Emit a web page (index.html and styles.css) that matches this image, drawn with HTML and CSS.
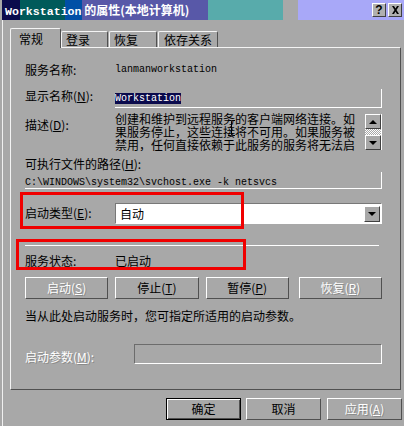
FILE: index.html
```html
<!DOCTYPE html>
<html lang="zh-CN">
<head>
    <meta charset="UTF-8">
    <title>Workstation 的属性</title>
    <link rel="stylesheet" href="styles.css">
</head>
<body>
    <div class="window">
        <div class="titlebar">
            <span class="title"><span class="title-mono">Workstation</span> 的属性(本地计算机)</span>
            <span class="tbtn tbtn-help">?</span>
            <span class="tbtn tbtn-close">
                <svg width="9" height="8" viewBox="0 0 9 8"><path d="M1 0h2l1.5 2.5L6 0h2L5.5 4 8 8H6L4.5 5.5 3 8H1l2.5-4z" fill="#000"/></svg>
            </span>
        </div>

        <div class="tabs">
            <div class="tab active">常规</div>
            <div class="tab tab-logon">登录</div>
            <div class="tab tab-recover">恢复</div>
            <div class="tab tab-deps">依存关系</div>
        </div>

        <div class="panel">
            <div class="row row-name">
                <span class="label">服务名称:</span>
                <span class="mono">lanmanworkstation</span>
            </div>

            <div class="row row-display">
                <span class="label">显示名称(<u>N</u>):</span>
                <div class="field display-field"><span class="mono selected">Workstation</span></div>
            </div>

            <div class="row row-desc">
                <span class="label">描述(<u>D</u>):</span>
                <div class="desc-text">创建和维护到远程服务的客户端网络连接。如果服务停止，这些连接将不可用。如果服务被禁用，任何直接依赖于此服务的服务将无法启</div>
                <div class="scrollbar">
                    <div class="sb-btn"><span class="arrow-up"></span></div>
                    <div class="sb-track"></div>
                    <div class="sb-btn"><span class="arrow-down"></span></div>
                </div>
            </div>

            <div class="row row-path-label">可执行文件的路径(<u>H</u>):</div>
            <div class="field path-field"><span class="mono">C:\WINDOWS\system32\svchost.exe -k netsvcs</span></div>

            <div class="row row-start">
                <span class="label">启动类型(<u>E</u>):</span>
                <div class="select">
                    <span class="select-value">自动</span>
                    <span class="select-btn"><span class="arrow-down"></span></span>
                </div>
            </div>

            <div class="separator"></div>

            <div class="row row-status">
                <span class="label">服务状态:</span>
                <span>已启动</span>
            </div>

            <div class="row row-buttons">
                <div class="btn disabled">启动(<u>S</u>)</div>
                <div class="btn">停止(<u>T</u>)</div>
                <div class="btn">暂停(<u>P</u>)</div>
                <div class="btn disabled btn-resume">恢复(<u>R</u>)</div>
            </div>

            <div class="row row-note">当从此处启动服务时，您可指定所适用的启动参数。</div>

            <div class="row row-params">
                <span class="label label-params disabled">启动参数(<u>M</u>):</span>
                <div class="param-field"></div>
            </div>

            <!-- red annotation boxes -->
            <div class="mark mark-start"></div>
            <div class="mark mark-status"></div>

            <svg class="ibeam" width="7" height="16" viewBox="0 0 7 16"><path d="M0 0.5h2.5l1 1 1-1H7M3.5 1.5v13M0 15.5h2.5l1-1 1 1H7" stroke="#000" fill="none"/></svg>
        </div>

        <div class="footer">
            <div class="btn btn-default">确定</div>
            <div class="btn btn-cancel">取消</div>
            <div class="btn disabled btn-apply">应用(<u>A</u>)</div>
        </div>
    </div>
</body>
</html>
```

FILE: styles.css
```css
body {
    margin: 0;
    background-color: #a8a8a8;
    font-family: "Noto Sans CJK SC", "Liberation Sans", sans-serif;
    font-size: 12px;
    line-height: 13px;
    color: #000;
}
u {
    text-decoration: underline;
}
.window {
    width: 404px;
    height: 426px;
    overflow: hidden;
    box-sizing: border-box;
    border-left: 2px solid #a8a8a8;
    position: relative;
}
.window::before {
    content: "";
    position: absolute;
    left: 0;
    top: 20px;
    bottom: 0;
    width: 1px;
    background: #f0f0f0;
}
.titlebar {
    height: 20px;
    margin-left: -2px;
    display: flex;
    align-items: center;
    background: linear-gradient(to right,
        #0b0b4c 0 20px, #005a5a 20px 65px, #0050a6 65px 82px,
        #5858a8 82px 208px, #58abab 208px 283px, #a8a8a8 283px 298px,
        #a8a8f8 298px);
    color: #fff;
    font-weight: bold;
}
.title {
    padding-left: 5px;
    font-size: 12px;
    white-space: nowrap;
}
.title-mono {
    font-family: "Liberation Mono", monospace;
    font-size: 11.6px;
}
.tbtn {
    width: 12px;
    height: 12px;
    display: flex;
    align-items: center;
    justify-content: center;
    background: #b0b0b0;
    border-top: 1px solid #fff;
    border-left: 1px solid #fff;
    border-right: 1px solid #404040;
    border-bottom: 1px solid #404040;
    color: #000;
    font-family: "Liberation Sans", sans-serif;
    font-size: 12px;
    font-weight: bold;
}
.tbtn-help {
    margin-left: auto;
}
.tbtn-close {
    margin-left: 2px;
    margin-right: 2px;
}

.tabs {
    display: flex;
    align-items: flex-end;
    height: 19px;
    margin-top: 8px;
    margin-left: 8px;
}
.tab {
    box-sizing: border-box;
    height: 16px;
    line-height: 15px;
    border-top: 1px solid #f4f4f4;
    border-left: 1px solid #f4f4f4;
    border-right: 1px solid #505050;
    border-radius: 2px 2px 0 0;
    padding-left: 4px;
}
.tab.active {
    width: 51px;
    height: 20px;
    line-height: 19px;
    padding-left: 8px;
    margin-bottom: -1px;
    background: #a8a8a8;
    position: relative;
    z-index: 1;
}
.tab-logon {
    width: 47px;
}
.tab-recover {
    width: 48px;
    margin-left: 1px;
}
.tab-deps {
    width: 60px;
    margin-left: 1px;
    padding-left: 5px;
}

.panel {
    position: relative;
    box-sizing: border-box;
    width: 391px;
    height: 343px;
    margin-left: 8px;
    padding: 0 18px 0 14px;
    border-top: 1px solid #f4f4f4;
    border-left: 1px solid #f4f4f4;
    border-right: 1px solid #505050;
    border-bottom: 1px solid #505050;
}
.row {
    display: flex;
    align-items: flex-start;
}
.label {
    width: 90px;
    flex: none;
}
.mono {
    font-family: "Liberation Mono", "DejaVu Sans Mono", monospace;
    font-size: 10px;
}
.row-name {
    margin-top: 13px;
    line-height: 18px;
}
.row-display {
    margin-top: 10px;
}
.field {
    box-sizing: border-box;
    border-right: 1px solid #fff;
    border-bottom: 1px solid #fff;
}
.display-field {
    width: 267px;
    height: 19px;
}
.selected {
    display: inline-block;
    background: #0a0a4c;
    color: #fff;
    line-height: 11px;
}
.row-desc {
    margin-top: 4px;
    height: 39px;
}
.row-desc .label {
    padding-top: 6px;
}
.desc-text {
    width: 245px;
    height: 39px;
    overflow: hidden;
    line-height: 13px;
}
.scrollbar {
    margin-left: 5px;
    margin-top: 2px;
    width: 16px;
    display: flex;
    flex-direction: column;
    border-right: 1px solid #fff;
}
.sb-btn {
    box-sizing: border-box;
    height: 15px;
    display: flex;
    align-items: center;
    justify-content: center;
    border-top: 1px solid #fff;
    border-left: 1px solid #fff;
    border-right: 1px solid #404040;
    border-bottom: 1px solid #404040;
}
.sb-track {
    height: 6px;
    background-color: #fff;
    background-image: repeating-conic-gradient(#a8a8a8 0 25%, #fff 0 50%);
    background-size: 2px 2px;
}
.arrow-up {
    width: 0;
    height: 0;
    border-left: 4px solid transparent;
    border-right: 4px solid transparent;
    border-bottom: 4px solid #000;
}
.arrow-down {
    width: 0;
    height: 0;
    border-left: 4px solid transparent;
    border-right: 4px solid transparent;
    border-top: 4px solid #000;
}
.row-path-label {
    margin-top: 6px;
}
.path-field {
    margin-top: 2px;
    height: 17px;
    line-height: 16px;
}
.row-start {
    margin-top: 14px;
    line-height: 19px;
}
.select {
    box-sizing: border-box;
    width: 267px;
    height: 21px;
    display: flex;
    align-items: center;
    border-top: 1px solid #787878;
    border-left: 1px solid #787878;
    border-right: 1px solid #fff;
    border-bottom: 1px solid #fff;
    background: #fff;
    padding: 1px;
}
.select-value {
    flex: 1;
    padding-left: 3px;
    line-height: 17px;
}
.select-btn {
    box-sizing: border-box;
    width: 16px;
    height: 16px;
    display: flex;
    align-items: center;
    justify-content: center;
    background: #a8a8a8;
    border-top: 1px solid #fff;
    border-left: 1px solid #fff;
    border-right: 1px solid #404040;
    border-bottom: 1px solid #404040;
}
.separator {
    margin-top: 21px;
    height: 1px;
    width: 354px;
    background: #fff;
}
.row-status {
    margin-top: 8px;
}
.row-buttons {
    margin-top: 10px;
    gap: 7px;
}
.btn {
    box-sizing: border-box;
    width: 84px;
    height: 22px;
    line-height: 20px;
    text-align: center;
    border-top: 1px solid #fff;
    border-left: 1px solid #fff;
    border-right: 1px solid #505050;
    border-bottom: 1px solid #505050;
}
.btn-resume {
    margin-left: 3px;
}
.disabled {
    color: #fff;
    text-shadow: 1px 1px 0 #8a8a8a;
}
.row-note {
    margin-top: 10px;
}
.row-params {
    margin-top: 22px;
}
.label-params {
    width: 109px;
    padding-top: 6px;
}
.param-field {
    box-sizing: border-box;
    width: 248px;
    height: 20px;
    border-top: 1px solid #6c6c6c;
    border-left: 1px solid #6c6c6c;
    border-right: 1px solid #fff;
    border-bottom: 1px solid #fff;
}

.mark {
    position: absolute;
    box-sizing: border-box;
    border: 3px solid #f00000;
}
.mark-start {
    left: 9px;
    top: 144px;
    width: 224px;
    height: 37px;
}
.mark-status {
    left: 5px;
    top: 191px;
    width: 230px;
    height: 31px;
}
.ibeam {
    position: absolute;
    left: 217px;
    top: 72px;
}

.footer {
    display: flex;
    justify-content: flex-end;
    gap: 5px;
    margin-top: 8px;
    padding-right: 2px;
}
.footer .btn {
    width: 75px;
}
.btn-default {
    border: 1px solid #000;
    box-shadow: inset 1px 1px 0 #fff, inset -1px -1px 0 #505050;
}
.btn-apply {
    margin-left: 1px;
}
```
